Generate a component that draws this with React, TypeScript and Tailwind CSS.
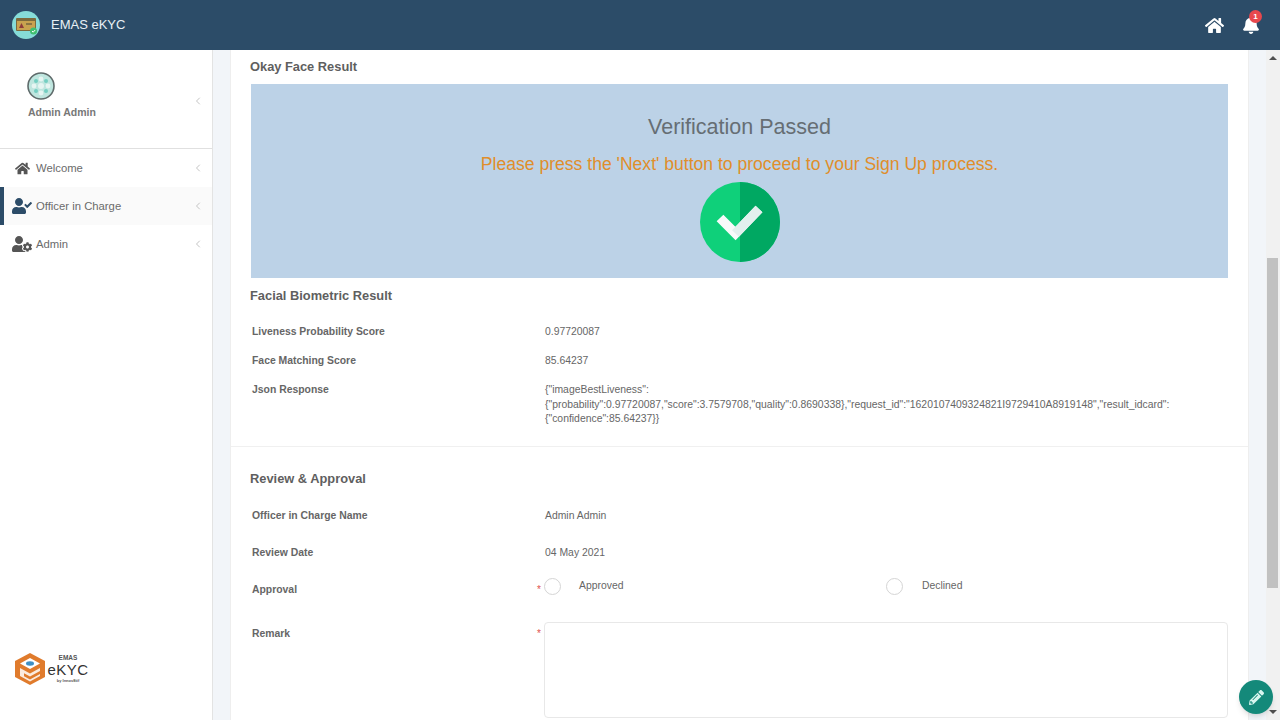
import { ChevronLeft } from "lucide-react";
import { FaBell, FaHome, FaPencilAlt, FaUserCheck, FaUserCog } from "react-icons/fa";

const font = "font-['Liberation_Sans',Arial,sans-serif]";

function AppLogo() {
  return (
    <svg width="28" height="28" viewBox="0 0 28 28">
      <circle cx="14" cy="14" r="14" fill="#86dcd8" />
      <rect x="4" y="7" width="20" height="13" rx="1" fill="#7d6a3c" />
      <rect x="5" y="10" width="18" height="9" fill="#c9a24f" />
      <path d="M7 17l2.500-5 2.500 5z" fill="#8f3b3b" />
      <rect x="14" y="12" width="6" height="2" fill="#8a7442" />
      <circle cx="21.500" cy="20" r="3.500" fill="#3fbf6f" />
      <path d="M20 20l1.200 1.200 2-2.200" stroke="#fff" strokeWidth="1" fill="none" />
    </svg>
  );
}

function Avatar() {
  return (
    <svg width="28" height="28" viewBox="0 0 28 28">
      <circle cx="14" cy="14" r="13" fill="#bfe6df" stroke="#5f6b6b" strokeWidth="1.600" />
      <circle cx="14" cy="14" r="3" fill="#e6f5f2" />
      <circle cx="14" cy="7" r="2.400" fill="#e6f5f2" />
      <circle cx="14" cy="21" r="2.400" fill="#e6f5f2" />
      <circle cx="7" cy="14" r="2.400" fill="#e6f5f2" />
      <circle cx="21" cy="14" r="2.400" fill="#e6f5f2" />
      <circle cx="9" cy="9" r="2" fill="#74cfc2" />
      <circle cx="19" cy="9" r="2" fill="#74cfc2" />
      <circle cx="9" cy="19" r="2" fill="#74cfc2" />
      <circle cx="19" cy="19" r="2" fill="#74cfc2" />
    </svg>
  );
}

function BrandLogo() {
  return (
    <div className="flex items-center">
      <svg width="32" height="34" viewBox="0 0 32 34">
        <path d="M16 1l15 8v16l-15 8-15-8V9z" fill="#e07b2c" />
        <path d="M16 6l10 5.500-10 5.500-10-5.500z" fill="#fff" />
        <ellipse cx="16" cy="11.500" rx="4" ry="2.200" fill="#3d8fc4" />
        <path d="M6 16l10 5.500 10-5.500v3l-10 5.500-6-3.200v3l6 3.200 10-5.500v2l-10 5.500-10-5.500z" fill="#fff" opacity="0.85" />
      </svg>
      <div className="ml-[3px] flex w-[38px] flex-col items-center text-[#555]">
        <span className="text-[6.500px] leading-[8px] font-bold">EMAS</span>
        <span className="text-[15px] leading-[15px] tracking-[0.5px] text-[#333]">eKYC</span>
        <span className="text-[4px] leading-[7px] font-bold">by Innov8tif</span>
      </div>
    </div>
  );
}

function PassBadge() {
  return (
    <svg width="80" height="80" viewBox="0 0 80 80">
      <circle cx="40" cy="40" r="40" fill="#0fd07a" />
      <path d="M40 0a40 40 0 0 1 0 80z" fill="#00a862" />
      <path d="M20 36l15.500 15.500L59 27" stroke="#f7fafa" strokeWidth="9.500" fill="none" />
      <path d="M35.500 51.500L59 27" stroke="#e2f0ee" strokeWidth="9.500" fill="none" />
    </svg>
  );
}

function NavItem({ icon, label, active }: { icon: React.ReactNode; label: string; active?: boolean }) {
  return (
    <div className={`flex h-[38px] items-center border-l-[4px] pr-[8px] pl-[6px] ${active ? "border-[#2c4c68] bg-[#fafafa]" : "border-transparent"}`}>
      <div className="flex w-[24px] justify-center">{icon}</div>
      <span className="ml-[2px] flex-1 text-[11.300px] text-[#6b6b6b]">{label}</span>
      <ChevronLeft size={12} className="text-[#c4c4c4]" />
    </div>
  );
}

function Row({ label, value, className }: { label: string; value: React.ReactNode; className?: string }) {
  return (
    <div className={`flex text-[10.400px] leading-[14.500px] ${className ?? ""}`}>
      <div className="w-[314px] pl-[21px] font-bold text-[#666]">{label}</div>
      <div className="w-[680px] text-[#666]">{value}</div>
    </div>
  );
}

function Required() {
  return <span className="pr-[3px] text-[10px] font-normal text-[#e0524d]">*</span>;
}

export default function App() {
  return (
    <div className={`flex h-screen flex-col overflow-hidden bg-white ${font}`}>
      <header className="flex h-[50px] shrink-0 items-center bg-[#2c4c68] pr-[20px] pl-[12px] shadow-sm">
        <AppLogo />
        <span className="ml-[11px] text-[13px] text-[#e8f0f5]">EMAS eKYC</span>
        <div className="ml-auto flex items-center gap-[18px]">
          <FaHome size={19} className="text-white" />
          <div className="relative">
            <FaBell size={18} className="text-white" />
            <span className="absolute top-[-6px] right-[-2px] flex h-[13px] w-[13px] items-center justify-center rounded-full bg-[#e8484d] text-[8px] font-bold text-white">1</span>
          </div>
        </div>
      </header>

      <div className="flex min-h-0 flex-1">
        <aside className="flex w-[213px] shrink-0 flex-col border-r border-[#e3e3e3] bg-white">
          <div className="relative h-[99px] border-b border-[#e0e0e0] pt-[22px] pl-[27px]">
            <Avatar />
            <div className="mt-[5px] ml-[1px] text-[10.500px] font-bold text-[#777]">Admin Admin</div>
            <ChevronLeft size={12} className="absolute top-[45px] right-[8px] text-[#c4c4c4]" />
          </div>
          <nav>
            <NavItem icon={<FaHome size={15} className="text-[#555]" />} label="Welcome" />
            <NavItem active icon={<FaUserCheck size={20} className="text-[#2c4c68]" />} label="Officer in Charge" />
            <NavItem icon={<FaUserCog size={20} className="text-[#555]" />} label="Admin" />
          </nav>
          <div className="mt-auto mb-[34px] ml-[14px]">
            <BrandLogo />
          </div>
        </aside>

        <main className="min-w-0 flex-1 bg-[#f2f5f9] px-[17px]">
          <div className="h-full w-[1019px] border-x border-[#eeeeee] bg-white">
            <div className="pr-[18px] pl-[19px]">
              <h2 className="pt-[9px] text-[12.850px] leading-[15px] font-bold text-[#5f5f5f]">Okay Face Result</h2>
              <div className="mt-[10px] ml-[1px] flex h-[194px] w-[977px] flex-col items-center bg-[#bcd2e7]">
                <div className="mt-[30px] text-[21.500px] leading-[26px] text-[#666e74]">Verification Passed</div>
                <div className="mt-[14px] text-[17.570px] leading-[21px] text-[#e08e2b]">Please press the 'Next' button to proceed to your Sign Up process.</div>
                <div className="mt-[7px]">
                  <PassBadge />
                </div>
              </div>
              <h2 className="mt-[10px] text-[12.850px] leading-[15px] font-bold text-[#5f5f5f]">Facial Biometric Result</h2>
            </div>

            <div className="mt-[22px] border-b border-[#f0f0f0] pb-[19px]">
              <Row label="Liveness Probability Score" value="0.97720087" />
              <Row className="mt-[14.500px]" label="Face Matching Score" value="85.64237" />
              <Row
                className="mt-[14.500px]"
                label="Json Response"
                value={
                  <>
                    <div>{'{"imageBestLiveness":'}</div>
                    <div>{'{"probability":0.97720087,"score":3.7579708,"quality":0.8690338},"request_id":"1620107409324821I9729410A8919148","result_idcard":'}</div>
                    <div>{'{"confidence":85.64237}}'}</div>
                  </>
                }
              />
            </div>

            <h2 className="mt-[24px] pl-[19px] text-[12.850px] leading-[15px] font-bold text-[#5f5f5f]">Review &amp; Approval</h2>
            <Row className="mt-[23px]" label="Officer in Charge Name" value="Admin Admin" />
            <Row className="mt-[23px]" label="Review Date" value="04 May 2021" />

            <div className="mt-[17px] flex text-[10.400px] leading-[14.500px]">
              <div className="flex w-[313px] justify-between pt-[5px] pl-[21px] font-bold text-[#666]">
                <span>Approval</span>
                <Required />
              </div>
              <div className="flex items-start">
                <div className="flex w-[342px] items-center">
                  <div className="h-[17px] w-[17px] rounded-full border border-[#d5d5d5]" />
                  <span className="ml-[18px] text-[#666]">Approved</span>
                </div>
                <div className="flex items-center">
                  <div className="h-[17px] w-[17px] rounded-full border border-[#d5d5d5]" />
                  <span className="ml-[19px] text-[#666]">Declined</span>
                </div>
              </div>
            </div>

            <div className="mt-[25px] flex text-[10.400px] leading-[14.500px]">
              <div className="flex w-[313px] justify-between pt-[5px] pl-[21px] font-bold text-[#666]">
                <span>Remark</span>
                <Required />
              </div>
              <div className="h-[96px] w-[684px] rounded-[4px] border border-[#e8e8e8]" />
            </div>
          </div>
        </main>

        <div className="flex w-[14px] shrink-0 flex-col bg-[#f1f1f1]">
          <div className="h-[16px] pt-[6px] pl-[3px]">
            <div className="h-0 w-0 border-x-[4px] border-b-[4px] border-x-transparent border-b-[#505050]" />
          </div>
          <div className="mt-[192px] ml-[1px] h-[330px] w-[11px] bg-[#c1c1c1]" />
          <div className="mt-auto h-[16px] pt-[6px] pl-[3px]">
            <div className="h-0 w-0 border-x-[4px] border-t-[4px] border-x-transparent border-t-[#505050]" />
          </div>
        </div>
      </div>

      <div className="absolute top-[680px] left-[1239px] flex h-[34px] w-[34px] items-center justify-center rounded-full bg-[#14897a] shadow-md">
        <FaPencilAlt size={15} className="text-[#d8f5ef]" />
      </div>
    </div>
  );
}
